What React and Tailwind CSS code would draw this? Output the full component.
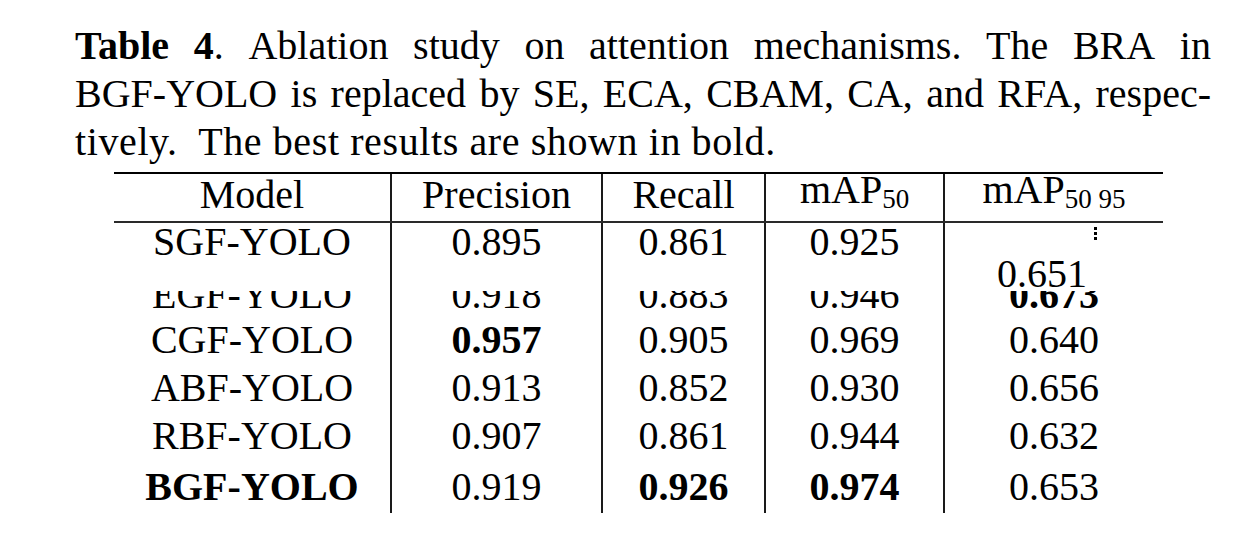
import React from "react";

const serif = { fontFamily: '"Liberation Serif", "Times New Roman", serif' };

const cols = "grid-cols-[278px_211px_163px_179px_218px]";

function Sub({ children }) {
  return <span className="text-[27px] align-[-5px]">{children}</span>;
}

const rows = [
  ["CGF-YOLO", "0.957", "0.905", "0.969", "0.640", [1], "h-[48px] leading-[42px]"],
  ["ABF-YOLO", "0.913", "0.852", "0.930", "0.656", [], "h-[48px] leading-[42px]"],
  ["RBF-YOLO", "0.907", "0.861", "0.944", "0.632", [], "h-[48px] leading-[42px]"],
  ["BGF-YOLO", "0.919", "0.926", "0.974", "0.653", [0, 2, 3], "h-[50px] leading-[48px]"],
];

function Cell({ children, last, bold, className = "" }) {
  return (
    <div
      className={
        "flex justify-center " +
        (last ? "" : "border-r-2 border-[#1a1a1a] ") +
        (bold ? "font-bold " : "") +
        className
      }
    >
      {children}
    </div>
  );
}

function ClippedCell({ text, last, bold }) {
  return (
    <div
      className={
        "h-[48px] flex flex-col items-center " +
        (last ? "" : "border-r-2 border-[#1a1a1a] ") +
        (bold ? "font-bold" : "")
      }
    >
      <div className="h-[20px] shrink-0" />
      <div className="h-[28px] overflow-hidden">
        <div className="-mt-[20px] leading-[48px]">{text}</div>
      </div>
    </div>
  );
}

export default function App() {
  return (
    <div className="w-[1245px] h-[559px] bg-white text-black overflow-hidden" style={serif}>
      <div className="pt-[22px] pl-[75px] w-[1211px] text-[40px] leading-[48px]">
        <div className="flex justify-between whitespace-nowrap">
          <span><b>Table</b></span>
          <span><b>4</b>.</span>
          <span>Ablation</span>
          <span>study</span>
          <span>on</span>
          <span>attention</span>
          <span>mechanisms.</span>
          <span>The</span>
          <span>BRA</span>
          <span>in</span>
        </div>
        <div className="flex justify-between whitespace-nowrap">
          <span>BGF-YOLO</span>
          <span>is</span>
          <span>replaced</span>
          <span>by</span>
          <span>SE,</span>
          <span>ECA,</span>
          <span>CBAM,</span>
          <span>CA,</span>
          <span>and</span>
          <span>RFA,</span>
          <span>respec-</span>
        </div>
        <div className="whitespace-nowrap tracking-[0.6px]">tively.&nbsp; The best results are shown in bold.</div>
      </div>

      <div className="ml-[114px] mt-[6px] w-[1049px] text-[40px]">
        <div className={`grid ${cols} border-t-2 border-b-2 border-t-black border-b-[#2a2a2a]`}>
          <div className="h-[47px] flex justify-center items-start border-r-2 border-[#1a1a1a] leading-[41px]">Model</div>
          <div className="h-[47px] flex justify-center items-start border-r-2 border-[#1a1a1a] leading-[41px]">Precision</div>
          <div className="h-[47px] flex justify-center items-start border-r-2 border-[#1a1a1a] leading-[41px]">Recall</div>
          <div className="h-[47px] flex justify-center items-start border-r-2 border-[#1a1a1a] leading-[31px]">
            <span>mAP<Sub>50</Sub></span>
          </div>
          <div className="h-[47px] flex justify-center items-start leading-[31px]">
            <span>mAP<Sub>50 95</Sub></span>
          </div>
        </div>

        <div className={`grid ${cols}`}>
          <Cell className="h-[48px] leading-[37px]">SGF-YOLO</Cell>
          <Cell className="h-[48px] leading-[37px]">0.895</Cell>
          <Cell className="h-[48px] leading-[37px]">0.861</Cell>
          <Cell className="h-[48px] leading-[37px]">0.925</Cell>
          <div className="h-[48px] relative">
            <div className="absolute left-[149px] top-[4px] flex flex-col gap-[2px]">
              <span className="block w-[3px] h-[3px] bg-black" />
              <span className="block w-[3px] h-[3px] bg-black" />
              <span className="block w-[3px] h-[3px] bg-black" />
            </div>
          </div>

          <ClippedCell text="EGF-YOLO" />
          <ClippedCell text="0.918" />
          <ClippedCell text="0.883" />
          <ClippedCell text="0.946" />
          <ClippedCell text="0.673" last bold />

          {rows.map((r) =>
            r.slice(0, 5).map((v, i) => (
              <Cell key={r[0] + i} last={i === 4} bold={r[5].includes(i)} className={r[6]}>
                {v}
              </Cell>
            ))
          )}
        </div>
        <div className="relative">
          <span className="absolute left-[883px] -top-[259px] leading-[40px] z-10">0.651</span>
        </div>
      </div>
    </div>
  );
}
